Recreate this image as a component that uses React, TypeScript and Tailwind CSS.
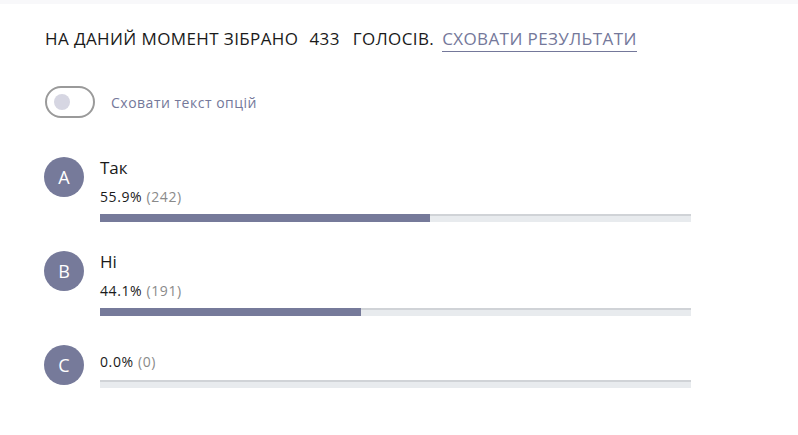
import { useState } from 'react';

const options = [
  { key: 'A', label: 'Так', votes: 242 },
  { key: 'B', label: 'Ні', votes: 191 },
  { key: 'C', label: '', votes: 0 },
];

const total = 433;

export default function App() {
  const [hideText, setHideText] = useState(false);

  return (
    <div className="min-h-screen bg-white text-[#1a1a1a]" style={{ fontFamily: '"Open Sans", "Noto Sans", sans-serif' }}>
      <div className="h-1 bg-[#f8f8fa]" />
      <div className="pl-[45px] pt-[23px]">
        <div className="flex items-baseline text-[17px] leading-[24px] tracking-[0.4px]">
          <span>НА ДАНИЙ МОМЕНТ ЗІБРАНО</span>
          <span className="ml-[11px]">433</span>
          <span className="ml-[13px]">ГОЛОСІВ.</span>
          <button className="ml-[8px] text-[#74789a] border-b border-[#74789a] leading-[24px] tracking-[0.4px]">
            СХОВАТИ РЕЗУЛЬТАТИ
          </button>
        </div>

        <div className="mt-[34px] flex items-center">
          <button
            onClick={() => setHideText(!hideText)}
            className="w-[50px] h-[32px] rounded-full border-2 border-[#9a9a9a] flex items-center px-[7px]"
          >
            <span className="w-[16px] h-[16px] rounded-full bg-[#d6d6e2]" />
          </button>
          <span className="ml-[16px] text-[14px] tracking-[0.5px] text-[#74789a]">Сховати текст опцій</span>
        </div>

        <div className="mt-[39px] flex flex-col gap-[29px]">
          {options.map((o) => {
            const pct = (o.votes / total) * 100;
            return (
              <div key={o.key} className="flex">
                <div className="w-[40px] h-[40px] rounded-full bg-[#767a9a] text-white flex items-center justify-center text-[18px] shrink-0 -ml-[1px]">
                  {o.key}
                </div>
                <div className="ml-[16px] w-[591px]">
                  {o.label && !hideText && (
                    <div className="text-[17px] leading-[22px] mb-[9px]">{o.label}</div>
                  )}
                  <div className={`text-[14px] leading-[18px] tracking-[0.6px] ${o.label ? '' : 'mt-[8px]'}`}>
                    {pct.toFixed(1)}% <span className="text-[#8a8a8a]">({o.votes})</span>
                  </div>
                  <div className={`${o.label ? 'mt-[8px]' : 'mt-[9px]'} h-[8px] bg-[#e8ebee] border-t-2 border-[#d0d3d7] relative`}>
                    <div className="absolute left-0 top-[-2px] h-[8px] bg-[#767a9a]" style={{ width: `${pct}%` }} />
                  </div>
                </div>
              </div>
            );
          })}
        </div>
      </div>
    </div>
  );
}
